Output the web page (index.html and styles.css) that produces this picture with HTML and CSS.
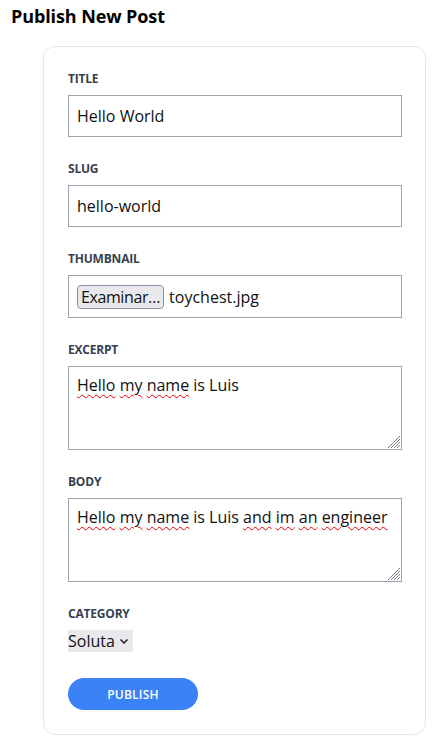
FILE: index.html
```html
<!DOCTYPE html>
<html lang="en">
<head>
<meta charset="utf-8">
<title>Publish New Post</title>
<link rel="stylesheet" href="styles.css">
</head>
<body>
<h1 class="page-title">Publish New Post</h1>
<form class="card">
  <div class="field">
    <label class="label">Title</label>
    <div class="input">Hello World</div>
  </div>
  <div class="field">
    <label class="label">Slug</label>
    <div class="input">hello-world</div>
  </div>
  <div class="field">
    <label class="label">Thumbnail</label>
    <div class="input file-input"><span class="file-btn">Examinar…</span><span>toychest.jpg</span></div>
  </div>
  <div class="field">
    <label class="label">Excerpt</label>
    <div class="textarea"><span class="sp">Hello</span> <span class="sp">my</span> <span class="sp">name</span> is Luis<svg class="grip" width="13" height="13" viewBox="0 0 13 13"><path d="M13 1L1 13M13 4L4 13M13 7L7 13M13 10L10 13" stroke="#7d7d85" stroke-width="1"/></svg></div>
  </div>
  <div class="field">
    <label class="label">Body</label>
    <div class="textarea"><span class="sp">Hello</span> <span class="sp">my</span> <span class="sp">name</span> is Luis <span class="sp">and</span> <span class="sp">im</span> <span class="sp">an</span> <span class="sp">engineer</span><svg class="grip" width="13" height="13" viewBox="0 0 13 13"><path d="M13 1L1 13M13 4L4 13M13 7L7 13M13 10L10 13" stroke="#7d7d85" stroke-width="1"/></svg></div>
  </div>
  <div class="field field-last">
    <label class="label">Category</label>
    <div class="select">Soluta<svg class="chev" width="10" height="8" viewBox="0 0 10 8"><path d="M1.5 2.5L5 6L8.5 2.5" fill="none" stroke="#1a1a1a" stroke-width="1.5"/></svg></div>
  </div>
  <button type="button" class="publish">Publish</button>
</form>
</body>
</html>
```
FILE: styles.css
```css
* { box-sizing: border-box; }
body {
  margin: 0;
  padding: 5px 11px 14px;
  font-family: "Open Sans", "Noto Sans", sans-serif;
  color: #111;
  background: #fff;
}
.page-title {
  margin: 0;
  font-size: 18px;
  font-weight: 700;
  line-height: 23px;
  color: #000;
  letter-spacing: -0.1px;
}
.card {
  margin: 18px 4px 0 32px;
  border: 1px solid #e5e7eb;
  border-radius: 12px;
  padding: 24px;
  display: flex;
  flex-direction: column;
  width: 383px;
}
.field {
  display: flex;
  flex-direction: column;
  margin-bottom: 24px;
}
.field-last { margin-bottom: 26px; }
.label {
  font-size: 12px;
  line-height: 16px;
  font-weight: 700;
  text-transform: uppercase;
  color: #374151;
  margin-bottom: 8px;
  letter-spacing: -0.2px;
}
.input {
  height: 42px;
  border: 1px solid #9ca3af;
  padding: 0 8px;
  font-size: 16px;
  line-height: 40px;
  color: #111;
  width: 334px;
}
.file-input {
  height: 43px;
  display: flex;
  align-items: center;
  gap: 5px;
}
.file-btn {
  height: 24px;
  padding: 0 3px;
  border: 1px solid #8f8f9d;
  border-radius: 4px;
  background: #e9e9ed;
  line-height: 22px;
  font-size: 16px;
  letter-spacing: -0.4px;
  color: #111;
}
.textarea {
  position: relative;
  height: 84px;
  width: 334px;
  border: 1px solid #9ca3af;
  padding: 6px 8px;
  font-size: 16px;
  line-height: 24px;
  color: #111;
}
.sp {
  text-decoration: underline wavy #e00;
  text-decoration-thickness: 1px;
  text-underline-offset: 3px;
}
.grip {
  position: absolute;
  right: 1px;
  bottom: 1px;
}
.select {
  align-self: flex-start;
  display: flex;
  align-items: center;
  gap: 4px;
  height: 22px;
  padding: 0 4px 0 0;
  background: #e9e9ed;
  font-size: 16px;
  line-height: 22px;
  color: #111;
}
.publish {
  align-self: flex-start;
  width: 130px;
  height: 32px;
  border: none;
  border-radius: 16px;
  background: #3b82f6;
  color: #fff;
  font-family: inherit;
  font-size: 12px;
  font-weight: 600;
  text-transform: uppercase;
  letter-spacing: 0.2px;
  padding: 0;
}
```
